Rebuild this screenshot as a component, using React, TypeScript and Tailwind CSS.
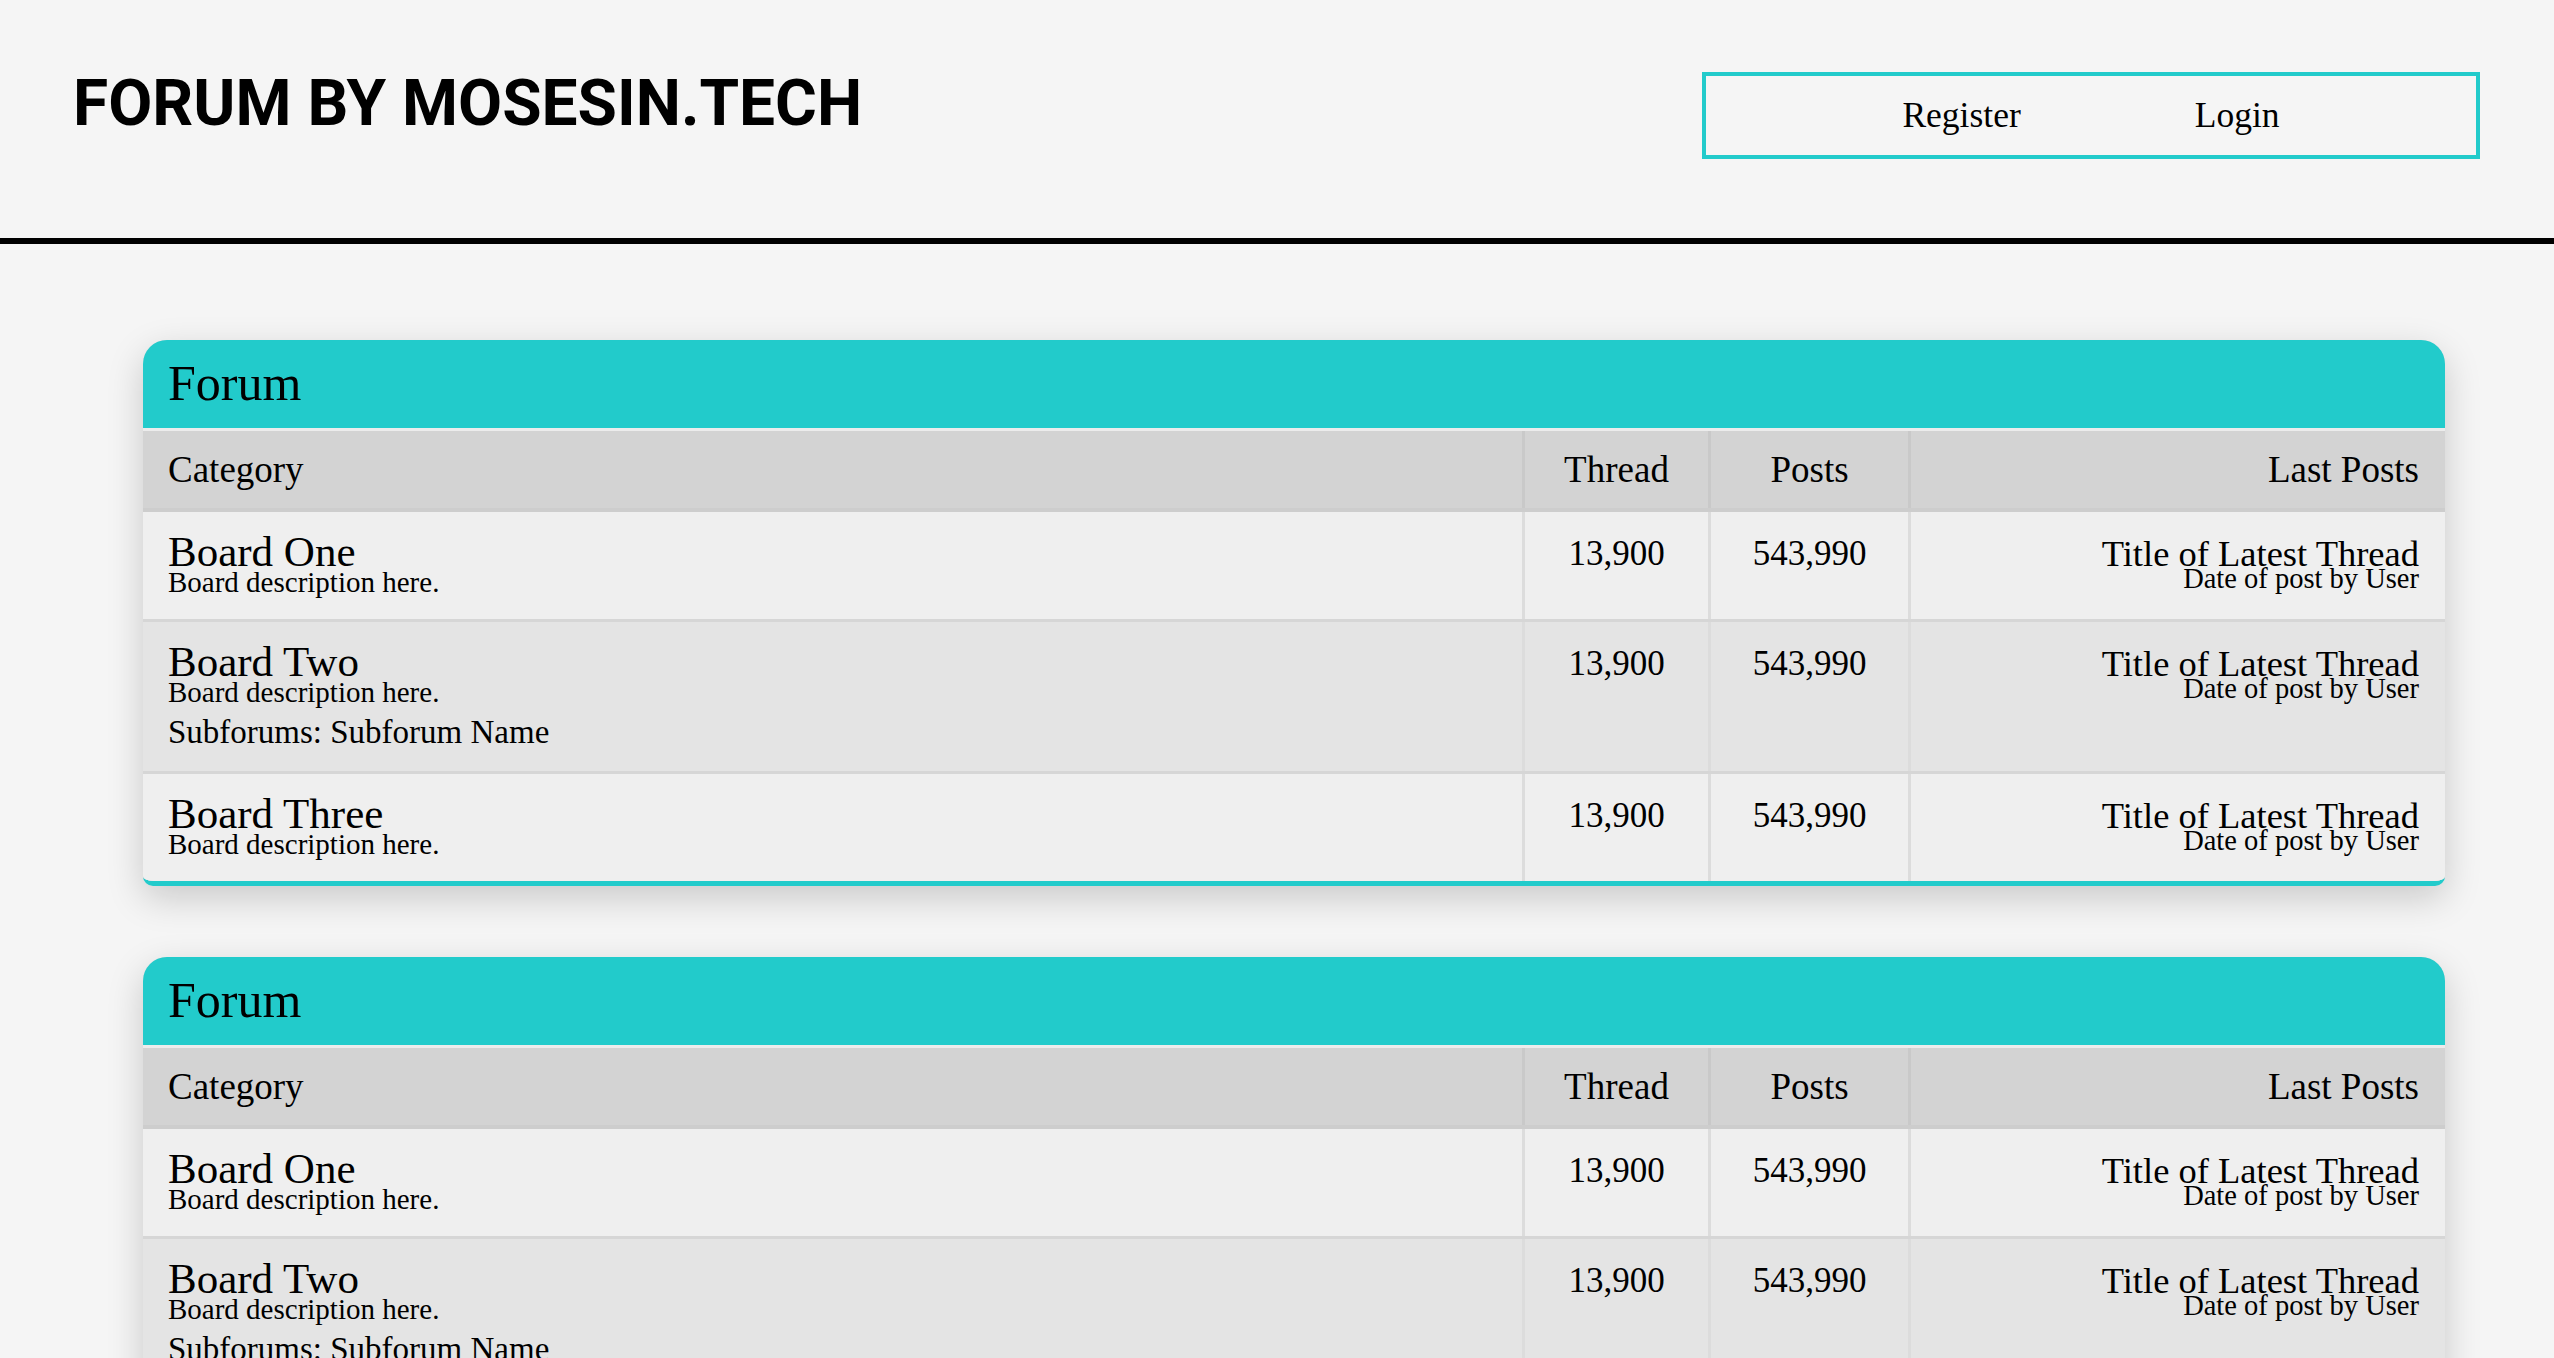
import React from 'react';

type tBoard = {
    id: number;
    name: string;
    description: string;
    subforum?: string;
    threads: string;
    posts: string;
}

const boards: tBoard[] = [
    { id: 1, name: 'Board One', description: 'Board description here.', threads: '13,900', posts: '543,990' },
    { id: 2, name: 'Board Two', description: 'Board description here.', subforum: 'Subforum Name', threads: '13,900', posts: '543,990' },
    { id: 3, name: 'Board Three', description: 'Board description here.', threads: '13,900', posts: '543,990' },
];

const serif = "font-['Liberation_Serif','Times_New_Roman',serif]";

const ForumCard = () => {
    return <div className="w-[2302px] overflow-hidden rounded-t-[24px] rounded-b-[10px] border-b-[5px] border-[#22cbcb] bg-[#d9d9d9] shadow-[0_12px_36px_rgba(0,0,0,0.18)]">
        <div className="h-[88px] bg-[#22cbcb] pl-[25px] pt-[18px]">
            <h2 className={`${serif} text-[50px] leading-none text-black`}>Forum</h2>
        </div>
        <div className="grid grid-cols-[1379px_183px_197px_534px] gap-x-[3px] border-t-[3px] border-[#ececec] bg-[#c9c9c9] text-[37px] leading-none text-black">
            <div className="bg-[#d3d3d3] px-[25px] py-[20px]">Category</div>
            <div className="bg-[#d3d3d3] py-[20px] text-center">Thread</div>
            <div className="bg-[#d3d3d3] py-[20px] text-center">Posts</div>
            <div className="bg-[#d3d3d3] px-[26px] py-[20px] text-right">Last Posts</div>
        </div>
        {boards.map((b, i) => {
            const bg = i % 2 === 1 ? 'bg-[#e4e4e4]' : 'bg-[#efefef]';
            return <div key={b.id} className={`grid grid-cols-[1379px_183px_197px_534px] gap-x-[3px] bg-[#dcdcdc] ${i === 0 ? 'border-t-[4px] border-[#cdcdcd]' : 'border-t-[3px] border-[#d6d6d6]'}`}>
                <div className={`${bg} px-[25px] pt-[23px] pb-[23px]`}>
                    <h3 className="text-[43px] leading-[33px]">{b.name}</h3>
                    <p className="text-[29px] leading-[28px]">{b.description}</p>
                    {b.subforum && <p className="mt-[10px] text-[33px] leading-[32px]">Subforums: {b.subforum}</p>}
                </div>
                <div className={`${bg} pt-[26px] text-center text-[35px] leading-[32px]`}>{b.threads}</div>
                <div className={`${bg} pt-[26px] text-center text-[35px] leading-[32px]`}>{b.posts}</div>
                <div className={`${bg} px-[26px] pt-[28px] text-right`}>
                    <p className="text-[36.5px] leading-[27px]">Title of Latest Thread</p>
                    <p className="text-[28.5px] leading-[24px]">Date of post by User</p>
                </div>
            </div>
        })}
    </div>
}

const App = () => {
    return <div className={`min-h-screen bg-[#f5f5f5] text-black ${serif}`}>
        <header className="flex h-[244px] items-start justify-between border-b-[6px] border-black pl-[73px] pr-[74px] pt-[72px]">
            <h1 className="font-['Roboto',sans-serif] text-[64px] font-bold leading-none">FORUM BY MOSESIN.TECH</h1>
            <nav className="flex h-[87px] w-[778px] items-center justify-center gap-[174px] border-4 border-[#22cbcb] text-[35.5px] leading-none">
                <a href="#">Register</a>
                <a href="#">Login</a>
            </nav>
        </header>
        <main className="flex flex-col gap-[71px] pl-[143px] pt-[96px] pb-[80px]">
            <ForumCard />
            <ForumCard />
        </main>
    </div>
}

export default App;
